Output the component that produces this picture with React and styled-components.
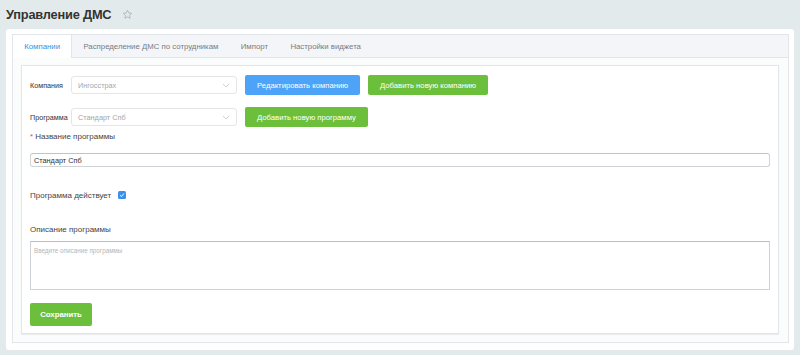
import React from "react";
import styled, { createGlobalStyle } from "styled-components";

const Global = createGlobalStyle`
  html, body { margin: 0; padding: 0; }
  body {
    background: #e3eaec;
    font-family: "Liberation Sans", Arial, sans-serif;
    color: #333;
    width: 800px;
    height: 355px;
    overflow: hidden;
  }
`;

const Page = styled.div`
  display: flex;
  flex-direction: column;
  padding: 0 6px 6px 6px;
`;

const Header = styled.div`
  display: flex;
  align-items: center;
  height: 29px;
  gap: 11px;
  padding-bottom: 1px;
  box-sizing: border-box;
`;

const Title = styled.h1`
  margin: 0;
  font-size: 12.8px;
  font-weight: bold;
  color: #333;
  letter-spacing: -0.2px;
`;

const Star = styled.svg`
  width: 11px;
  height: 11px;
  margin-top: 1px;
`;

const Card = styled.div`
  background: #fff;
  border-radius: 3px;
  padding: 5px 5px 7px 6px;
`;

const TabPanel = styled.div`
  border: 1px solid #e2e5ea;
  background: #fbfcfc;
`;

const TabBar = styled.div`
  display: flex;
  height: 22px;
  background: #f4f5f9;
  border-bottom: 1px solid #e2e5ea;
`;

const Tab = styled.div`
  display: flex;
  align-items: center;
  padding: 0 11.2px;
  font-size: 7.8px;
  color: ${(p) => (p.$active ? "#3e8edb" : "#777c82")};
  background: ${(p) => (p.$active ? "#fff" : "transparent")};
  border-right: ${(p) => (p.$active ? "1px solid #e2e5ea" : "none")};
  margin-bottom: ${(p) => (p.$active ? "-1px" : "0")};
  white-space: nowrap;
`;

const Content = styled.div`
  padding: 7px 9px 8px 8px;
`;

const Form = styled.div`
  background: #fff;
  border: 1px solid #e2e5ea;
  box-shadow: 0 1px 1px rgba(0, 0, 0, 0.06);
  padding: 9px 8px 7px 8px;
  display: flex;
  flex-direction: column;
`;

const Row = styled.div`
  display: flex;
  align-items: center;
  height: 20px;
  margin-bottom: ${(p) => p.$mb || 0}px;
`;

const SmallLabel = styled.span`
  width: 41px;
  font-size: 7.2px;
  color: #333;
`;

const Select = styled.div`
  width: 166px;
  height: 18px;
  box-sizing: border-box;
  border: 1px solid #e3e5e9;
  border-radius: 3px;
  display: flex;
  align-items: center;
  justify-content: space-between;
  padding: 0 6px 0 6px;
  font-size: 7.3px;
  color: #a3a7ab;
  margin-right: 8px;
`;

const Chevron = styled.svg`
  width: 8px;
  height: 5px;
`;

const Button = styled.button`
  height: 20px;
  border: none;
  border-radius: 2px;
  padding: 0 ${(p) => p.$px || 12}px;
  background: ${(p) => (p.$color === "blue" ? "#4da3f7" : "#6cbf3b")};
  color: #fff;
  font-family: "Liberation Sans", Arial, sans-serif;
  font-size: 7.7px;
  margin-right: 8px;
  cursor: pointer;
  white-space: nowrap;
`;

const FieldLabel = styled.div`
  font-size: 8px;
  color: #444;
  height: 12px;
  line-height: 12px;
  margin-top: ${(p) => p.$mt || 0}px;
`;

const Req = styled.span`
  color: #e44a4a;
  margin-right: 2px;
`;

const Input = styled.div`
  height: 14px;
  box-sizing: border-box;
  border: 1px solid #cfd3d8;
  border-top-color: #bfc4ca;
  border-radius: 3px;
  font-size: 7.3px;
  color: #333;
  display: flex;
  align-items: center;
  padding: 0 3px;
  margin-top: ${(p) => p.$mt || 0}px;
`;

const CheckRow = styled.div`
  display: flex;
  align-items: center;
  gap: 7px;
  font-size: 8px;
  color: #444;
  margin-top: ${(p) => p.$mt || 0}px;
  height: 12px;
`;

const Check = styled.span`
  width: 8px;
  height: 8px;
  border-radius: 1.5px;
  background: #3d8fea;
  display: inline-flex;
  align-items: center;
  justify-content: center;
`;

const TextArea = styled.div`
  height: 49px;
  box-sizing: border-box;
  border: 1px solid #cfd3d8;
  border-top-color: #b9bec4;
  font-size: 6.3px;
  color: #b3b7bb;
  padding: 5px 3px;
  margin-top: ${(p) => p.$mt || 0}px;
`;

const SaveButton = styled(Button)`
  height: 23px;
  width: 62px;
  padding: 0;
  font-weight: bold;
  font-size: 7.8px;
  align-self: flex-start;
  margin-top: 13px;
`;

function ChevronIcon() {
  return (
    <Chevron viewBox="0 0 8 5">
      <path d="M1 1 L4 4 L7 1" fill="none" stroke="#c2c6ca" strokeWidth="0.8" />
    </Chevron>
  );
}

export default function App() {
  return (
    <>
      <Global />
      <Page>
        <Header>
          <Title>Управление ДМС</Title>
          <Star viewBox="0 0 24 24">
            <path
              d="M12 2.8l2.8 5.8 6.3.9-4.6 4.4 1.1 6.3L12 17.2l-5.6 3 1.1-6.3-4.6-4.4 6.3-.9z"
              fill="none"
              stroke="#a9b0b6"
              strokeWidth="1.8"
              strokeLinejoin="round"
            />
          </Star>
        </Header>
        <Card>
          <TabPanel>
            <TabBar>
              <Tab $active>Компании</Tab>
              <Tab>Распределение ДМС по сотрудникам</Tab>
              <Tab>Импорт</Tab>
              <Tab>Настройки виджета</Tab>
            </TabBar>
            <Content>
              <Form>
                <Row $mb={12}>
                  <SmallLabel>Компания</SmallLabel>
                  <Select>
                    <span>Ингосстрах</span>
                    <ChevronIcon />
                  </Select>
                  <Button $color="blue" $px={12}>Редактировать компанию</Button>
                  <Button $px={12}>Добавить новую компанию</Button>
                </Row>
                <Row>
                  <SmallLabel>Программа</SmallLabel>
                  <Select>
                    <span>Стандарт Спб</span>
                    <ChevronIcon />
                  </Select>
                  <Button $px={12}>Добавить новую программу</Button>
                </Row>
                <FieldLabel $mt={4}>
                  <Req>*</Req>Название программы
                </FieldLabel>
                <Input $mt={10}>Стандарт Спб</Input>
                <CheckRow $mt={22}>
                  Программа действует
                  <Check>
                    <svg width="6" height="6" viewBox="0 0 6 6">
                      <path d="M1 3.2 L2.5 4.5 L5 1.5" fill="none" stroke="#fff" strokeWidth="0.9" />
                    </svg>
                  </Check>
                </CheckRow>
                <FieldLabel $mt={23}>Описание программы</FieldLabel>
                <TextArea $mt={5}>Введите описание программы</TextArea>
                <SaveButton>Сохранить</SaveButton>
              </Form>
            </Content>
          </TabPanel>
        </Card>
      </Page>
    </>
  );
}
